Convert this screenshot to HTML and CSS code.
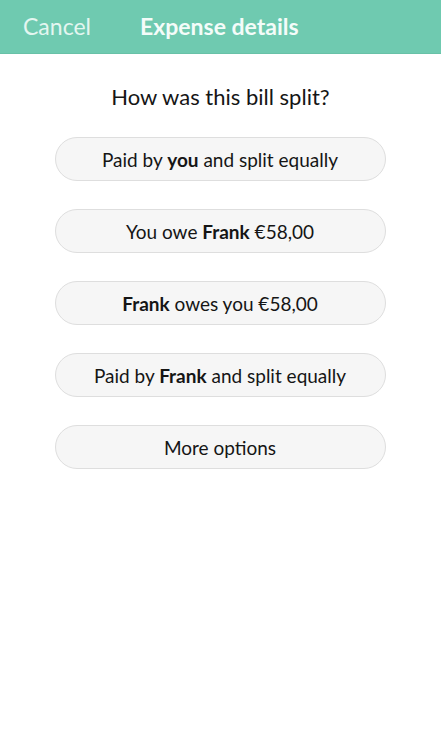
FILE: index.html
```html
<!DOCTYPE html>
<html>
<head>
<meta charset="utf-8">
<link rel="stylesheet" href="styles.css">
</head>
<body>
<header class="topbar">
  <span class="cancel">Cancel</span>
  <span class="title">Expense details</span>
</header>
<main class="content">
  <h1 class="question">How was this bill split?</h1>
  <div class="options">
    <button class="opt">Paid by <b>you</b> and split equally</button>
    <button class="opt">You owe <b>Frank</b> €58,00</button>
    <button class="opt"><b>Frank</b> owes you €58,00</button>
    <button class="opt">Paid by <b>Frank</b> and split equally</button>
    <button class="opt">More options</button>
  </div>
</main>
</body>
</html>
```

FILE: styles.css
```css
html, body {
  margin: 0;
  padding: 0;
  background: #ffffff;
  font-family: Lato, "Open Sans", sans-serif;
}
.topbar {
  height: 54px;
  background: #6fcab0;
  display: flex;
  align-items: center;
  padding: 0 0 2px 23px;
  box-sizing: border-box;
  border-bottom: 1px solid #68c1a7;
  gap: 49px;
}
.cancel {
  color: #e4f6f0;
  font-size: 23px;
}
.title {
  color: #f4fcf9;
  font-size: 23px;
  font-weight: 700;
}
.content {
  display: flex;
  flex-direction: column;
  align-items: center;
}
.question {
  margin: 29px 0 0;
  font-size: 22px;
  font-weight: 400;
  color: #151515;
  line-height: 27px;
}
.options {
  margin-top: 27px;
  display: flex;
  flex-direction: column;
  gap: 28px;
}
.opt {
  width: 331px;
  height: 44px;
  margin-left: -1px;
  border-radius: 22px;
  border: 1px solid #dedede;
  background: #f6f6f6;
  font-family: Lato, "Open Sans", sans-serif;
  font-size: 19px;
  color: #151515;
  padding: 0;
}
.opt b {
  font-weight: 700;
}
```
